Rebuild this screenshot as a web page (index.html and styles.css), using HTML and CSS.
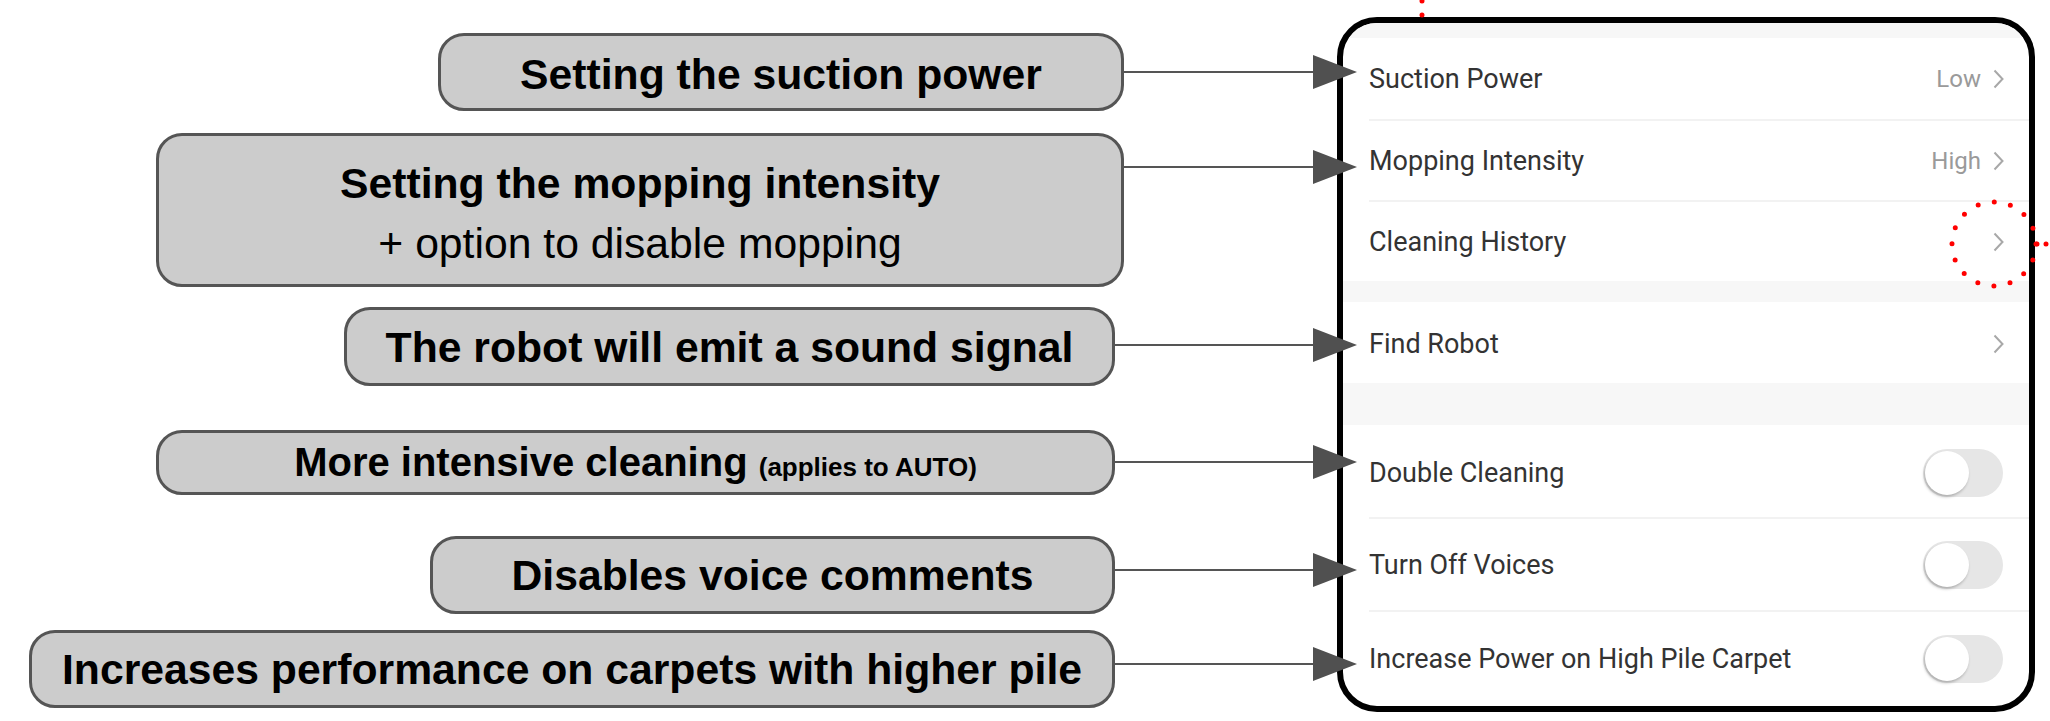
FILE: index.html
```html
<!DOCTYPE html>
<html lang="en">
<head>
    <meta charset="UTF-8">
    <meta name="viewport" content="width=device-width, initial-scale=1.0">
    <title>Robot Settings Explained</title>
    <link rel="stylesheet" href="styles.css">
</head>
<body>
    <div class="stage">
        <div class="notes">
            <div class="note n1">
                <div class="note-box">Setting the suction power</div>
                <div class="link"><span class="line"></span><span class="head"></span></div>
            </div>
            <div class="note n2">
                <div class="note-box">
                    <span>Setting the mopping intensity</span>
                    <span class="plain">+ option to disable mopping</span>
                </div>
                <div class="link"><span class="line"></span><span class="head"></span></div>
            </div>
            <div class="note n3">
                <div class="note-box">The robot will emit a sound signal</div>
                <div class="link long"><span class="line"></span><span class="head"></span></div>
            </div>
            <div class="note n4">
                <div class="note-box"><span>More intensive cleaning <small>(applies to AUTO)</small></span></div>
                <div class="link long"><span class="line"></span><span class="head"></span></div>
            </div>
            <div class="note n5">
                <div class="note-box">Disables voice comments</div>
                <div class="link long"><span class="line"></span><span class="head"></span></div>
            </div>
            <div class="note n6">
                <div class="note-box">Increases performance on carpets with higher pile</div>
                <div class="link long"><span class="line"></span><span class="head"></span></div>
            </div>
        </div>

        <div class="phone">
            <div class="band top"></div>
            <div class="row">
                <span class="label">Suction Power</span>
                <span class="value">Low</span>
                <svg class="chev" viewBox="0 0 11 20"><path d="M1.5 1.5 L9.5 10 L1.5 18.5"/></svg>
            </div>
            <div class="row">
                <span class="label">Mopping Intensity</span>
                <span class="value">High</span>
                <svg class="chev" viewBox="0 0 11 20"><path d="M1.5 1.5 L9.5 10 L1.5 18.5"/></svg>
            </div>
            <div class="row">
                <span class="label">Cleaning History</span>
                <svg class="chev" viewBox="0 0 11 20"><path d="M1.5 1.5 L9.5 10 L1.5 18.5"/></svg>
            </div>
            <div class="band thin"></div>
            <div class="row find">
                <span class="label">Find Robot</span>
                <svg class="chev" viewBox="0 0 11 20"><path d="M1.5 1.5 L9.5 10 L1.5 18.5"/></svg>
            </div>
            <div class="band wide"></div>
            <div class="row tall first">
                <span class="label">Double Cleaning</span>
                <span class="toggle"><span class="knob"></span></span>
            </div>
            <div class="row tall">
                <span class="label">Turn Off Voices</span>
                <span class="toggle"><span class="knob"></span></span>
            </div>
            <div class="row tall last">
                <span class="label">Increase Power on High Pile Carpet</span>
                <span class="toggle"><span class="knob"></span></span>
            </div>
        </div>

        <!-- red dotted highlight drawn on top of the screenshot -->
        <svg class="marks" viewBox="0 0 2050 721">
            <line x1="1422" y1="1" x2="1422" y2="16" stroke-dasharray="0 14"/>
            <circle cx="1994" cy="244" r="42" stroke-dasharray="0 16.49"/>
            <line x1="2037" y1="244" x2="2050" y2="244" stroke-dasharray="0 9"/>
        </svg>
    </div>
</body>
</html>
```

FILE: styles.css
```css
body {
    margin: 0;
    background-color: #fff;
}
.stage {
    position: relative;
    display: flex;
    width: 2050px;
    height: 721px;
    overflow: hidden;
}

/* callouts on the left */
.notes {
    position: relative;
    z-index: 1;
    flex: none;
    width: 1357px;
    margin-right: -20px;
    padding-top: 33px;
    box-sizing: border-box;
    display: flex;
    flex-direction: column;
}
.note {
    display: flex;
    justify-content: flex-end;
    align-items: center;
}
.note-box {
    box-sizing: border-box;
    display: flex;
    flex-direction: column;
    align-items: center;
    justify-content: center;
    background-color: #cccccc;
    border: 3px solid #555;
    border-radius: 26px;
    font-family: 'Liberation Sans', Arial, sans-serif;
    font-weight: bold;
    font-size: 42.7px;
    line-height: 48px;
    color: #000;
    white-space: nowrap;
}
.note-box small {
    font-size: 26px;
}
.note-box .plain {
    font-weight: normal;
}
.link {
    flex: none;
    display: flex;
    align-items: center;
    width: 233px;
}
.link.long {
    width: 242px;
}
.line {
    flex: 1;
    height: 2px;
    background-color: #555;
}
.head {
    width: 0;
    height: 0;
    border-left: 44px solid #505050;
    border-top: 17.5px solid transparent;
    border-bottom: 17.5px solid transparent;
}
.n1 .note-box {
    width: 686px;
    height: 78px;
    padding-top: 4px;
}
.n2 {
    margin-top: 22px;
    align-items: flex-start;
}
.n2 .note-box {
    width: 968px;
    height: 154px;
    padding-top: 6px;
    line-height: 60px;
}
.n2 .link {
    margin-top: 17px;
}
.n3 {
    margin-top: 20px;
}
.n3 .note-box {
    width: 771px;
    height: 79px;
}
.n3 .link {
    margin-bottom: 4px;
}
.n4 {
    margin-top: 44px;
}
.n4 .note-box {
    width: 959px;
    height: 65px;
    padding-top: 3px;
    font-size: 40px;
}
.n4 .link {
    margin-bottom: 2px;
}
.n5 {
    margin-top: 41px;
}
.n5 .note-box {
    width: 685px;
    height: 78px;
}
.n5 .link,
.n6 .link {
    margin-bottom: 10px;
}
.n6 {
    margin-top: 16px;
}
.n6 .note-box {
    width: 1086px;
    height: 78px;
}

/* phone screen */
.phone {
    flex: none;
    margin-top: 17px;
    width: 698px;
    height: 695px;
    box-sizing: border-box;
    border: 6px solid #000;
    border-radius: 40px;
    overflow: hidden;
    background-color: #fff;
    display: flex;
    flex-direction: column;
    font-family: Roboto, 'Noto Sans', sans-serif;
    font-size: 27px;
    color: #333;
}
.band {
    flex: none;
    background-color: #f7f7f7;
}
.band.top {
    height: 15px;
}
.band.thin {
    height: 21px;
}
.band.wide {
    height: 42px;
}
.row {
    flex: none;
    box-sizing: border-box;
    display: flex;
    align-items: center;
    height: 81px;
    margin-left: 26px;
    padding-right: 25px;
}
.row + .row {
    border-top: 2px solid #f2f2f2;
}
.row.find {
    height: 81px;
    padding-top: 2px;
}
.row.tall {
    height: 93px;
    padding-right: 26px;
}
.row.tall.first {
    height: 92px;
    padding-top: 4px;
}
.row.tall.last {
    flex: 1;
}
.label {
    flex: 1;
}
.value {
    font-size: 24px;
    color: #9a9a9a;
    margin-right: 12px;
}
.chev {
    width: 11px;
    height: 20px;
}
.chev path {
    fill: none;
    stroke: #a8a8a8;
    stroke-width: 2;
}
.toggle {
    display: flex;
    align-items: center;
    width: 80px;
    height: 48px;
    padding: 0 2px;
    box-sizing: border-box;
    border-radius: 24px;
    background-color: #e6e6e6;
}
.knob {
    width: 44px;
    height: 44px;
    border-radius: 50%;
    background-color: #fff;
    box-shadow: -1px 2px 3px rgba(0, 0, 0, 0.25);
}

.marks {
    position: absolute;
    top: 0;
    left: 0;
    width: 2050px;
    height: 721px;
    z-index: 2;
    pointer-events: none;
}
.marks line,
.marks circle {
    fill: none;
    stroke: #ff0000;
    stroke-width: 5;
    stroke-linecap: round;
}
```
